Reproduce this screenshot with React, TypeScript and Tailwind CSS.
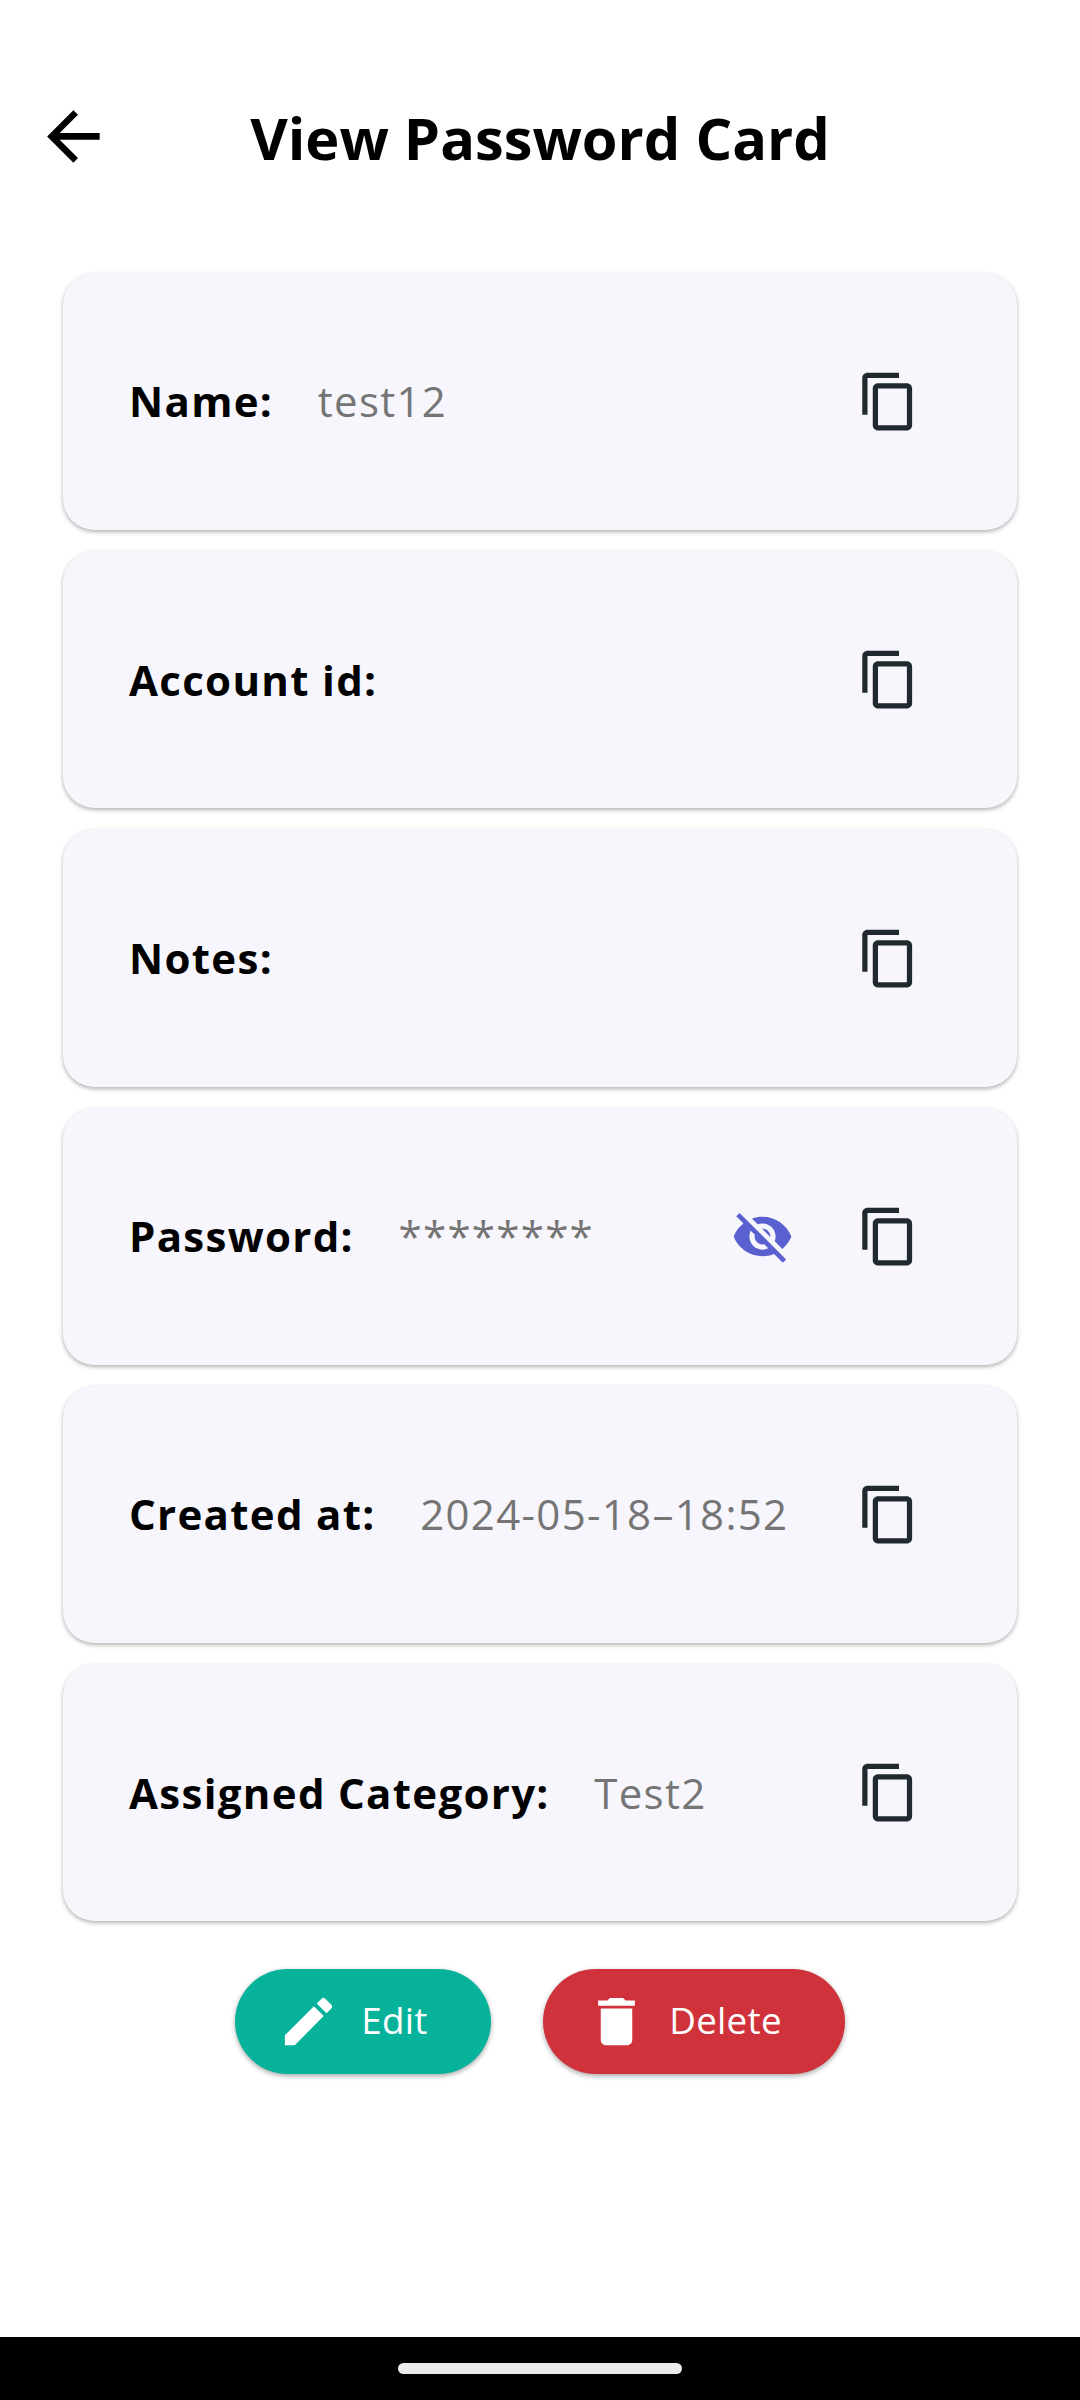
import type { ReactNode } from "react";

function Icon({ d, className }: { d: string; className: string }) {
  return (
    <svg viewBox="0 0 24 24" fill="currentColor" className={className}>
      <path d={d} />
    </svg>
  );
}

const ARROW = "M20 11H7.83l5.59-5.59L12 4l-8 8 8 8 1.41-1.41L7.83 13H20v-2z";
const COPY =
  "M16 1H4c-1.1 0-2 .9-2 2v14h2V3h12V1zm3 4H8c-1.1 0-2 .9-2 2v14c0 1.100.9 2 2 2h11c1.100 0 2-.9 2-2V7c0-1.100-.9-2-2-2zm0 16H8V7h11v14z";
const EYE_OFF =
  "M12 7c2.76 0 5 2.240 5 5 0 .65-.13 1.260-.36 1.830l2.920 2.920c1.510-1.260 2.700-2.890 3.430-4.750-1.730-4.390-6-7.500-11-7.500-1.400 0-2.740.25-3.980.7l2.160 2.160C10.740 7.130 11.350 7 12 7zM2 4.270l2.280 2.280.46.46C3.080 8.300 1.780 10.020 1 12c1.730 4.390 6 7.500 11 7.500 1.550 0 3.030-.3 4.380-.84l.42.42L19.730 22 21 20.730 3.270 3 2 4.270zM7.530 9.800l1.550 1.550c-.05.21-.08.43-.08.65 0 1.660 1.340 3 3 3 .22 0 .44-.03.65-.08l1.550 1.550c-.67.33-1.410.53-2.200.53-2.760 0-5-2.240-5-5 0-.79.2-1.530.53-2.200zm4.310-.78l3.150 3.150.02-.16c0-1.660-1.340-3-3-3l-.17.01z";
const PENCIL =
  "M3 17.250V21h3.750L17.810 9.940l-3.750-3.750L3 17.250zM20.710 7.040c.39-.39.39-1.020 0-1.410l-2.340-2.340c-.39-.39-1.020-.39-1.410 0l-1.830 1.830 3.750 3.750 1.830-1.830z";
const TRASH = "M6 19c0 1.100.9 2 2 2h8c1.100 0 2-.9 2-2V7H6v12zM19 4h-3.500l-1-1h-5l-1 1H5v2h14V4z";

function Row({ label, value, children }: { label: string; value?: string; children?: ReactNode }) {
  return (
    <div className="flex h-[257.25px] items-center rounded-[31.5px] bg-[#f7f6fd] pl-[66px] pr-[97.25px] shadow-[0_2px_4px_rgba(0,0,0,0.3)]">
      <span className="whitespace-nowrap pb-[1.5px] text-[42px] font-bold tracking-[1.3125px] text-black">{label}</span>
      <span className="ml-[44.6px] whitespace-nowrap pb-[1.5px] text-[42px] tracking-[1.3125px] text-[#757575]">{value}</span>
      <div className="ml-auto flex items-center gap-[63px]">
        {children}
        <Icon d={COPY} className="size-[63px] text-[#1f292e]" />
      </div>
    </div>
  );
}

export default function App() {
  return (
    <div className="flex h-[2400px] w-[1080px] flex-col bg-white font-['Open_Sans',sans-serif]">
      <header className="grid h-[272.9px] grid-cols-[147px_1fr_147px] items-center">
        <Icon d={ARROW} className="ml-[34px] size-[78.75px] text-black" />
        <h1 className="whitespace-nowrap pt-[4px] text-center text-[57.75px] font-bold text-black">View Password Card</h1>
      </header>
      <main className="flex flex-col gap-[21px] px-[63px]">
        <Row label="Name:" value="test12" />
        <Row label="Account id:" />
        <Row label="Notes:" />
        <Row label="Password:" value="********">
          <Icon d={EYE_OFF} className="size-[63px] text-[#5a60cf]" />
        </Row>
        <Row label="Created at:" value="2024-05-18–18:52" />
        <Row label="Assigned Category:" value="Test2" />
      </main>
      <div className="mt-[47.2px] flex justify-center gap-[52.5px] text-[36.75px] tracking-[0.2625px] text-white">
        <button className="flex h-[105px] w-[255.5px] items-center rounded-full bg-[#06b299] pl-[42px] shadow-[0_2px_5px_rgba(0,0,0,0.35)]">
          <Icon d={PENCIL} className="mr-[21px] size-[63px]" />
          <span className="pb-[2px]">Edit</span>
        </button>
        <button className="flex h-[105px] w-[301.5px] items-center rounded-full bg-[#cf323a] pl-[42px] shadow-[0_2px_5px_rgba(0,0,0,0.35)]">
          <Icon d={TRASH} className="mr-[21px] size-[63px]" />
          <span className="pb-[2px]">Delete</span>
        </button>
      </div>
      <footer className="mt-auto flex h-[63px] items-center justify-center bg-black">
        <div className="h-[11px] w-[284px] rounded-full bg-[#ebebeb]" />
      </footer>
    </div>
  );
}
